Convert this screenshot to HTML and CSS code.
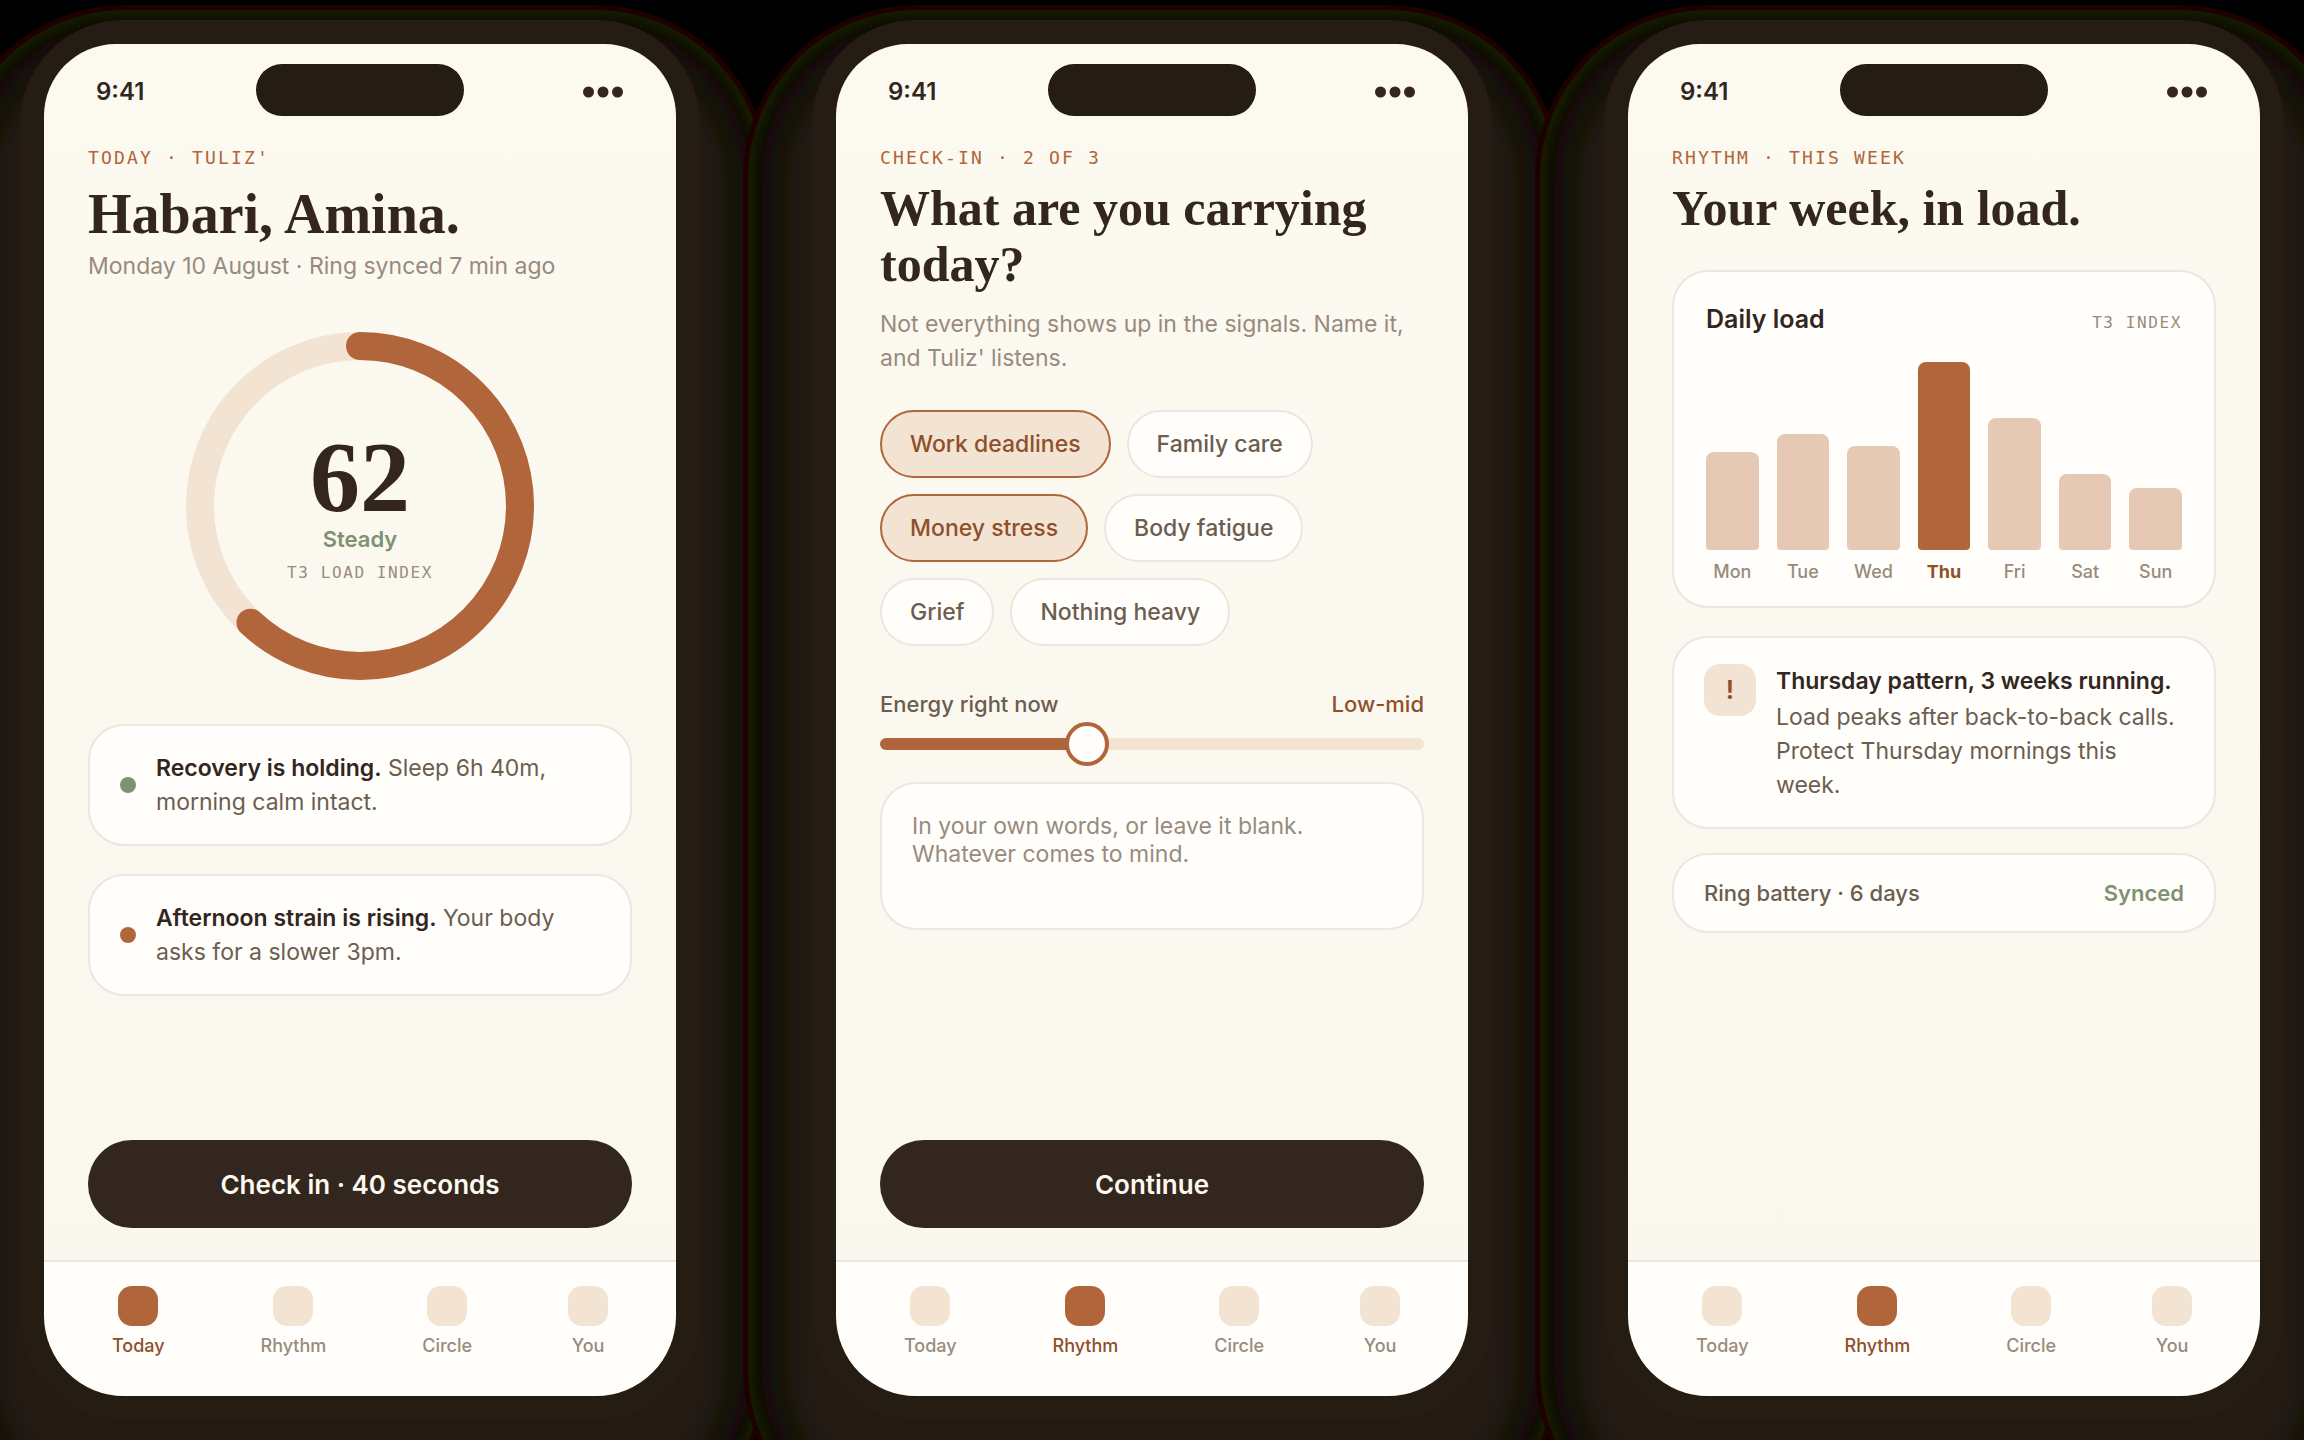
FILE: index.html
```html
<!DOCTYPE html>
<html lang="en">
<head>
    <meta charset="UTF-8">
    <meta name="viewport" content="width=device-width, initial-scale=1.0">
    <title>Tuliz'</title>
    <link rel="stylesheet" href="styles.css">
</head>
<body>
    <main class="stage">

        <!-- Today -->
        <section class="phone">
            <div class="status">
                <span class="status-time">9:41</span>
                <span class="island"></span>
                <svg class="status-dots" width="41" height="12" viewBox="0 0 41 12" aria-hidden="true">
                    <circle cx="5.5" cy="6" r="5.5"/><circle cx="20" cy="6" r="5.5"/><circle cx="34.5" cy="6" r="5.5"/>
                </svg>
            </div>
            <div class="content">
                <p class="eyebrow">TODAY · TULIZ'</p>
                <h1 class="greeting">Habari, Amina.</h1>
                <p class="date">Monday 10 August · Ring synced 7 min ago</p>

                <div class="ring">
                    <svg viewBox="0 0 348 348" aria-hidden="true">
                        <circle class="ring-track" cx="174" cy="174" r="160"/>
                        <circle class="ring-value" cx="174" cy="174" r="160" pathLength="100" stroke-dasharray="62 100" transform="rotate(-90 174 174)"/>
                    </svg>
                    <div class="ring-text">
                        <strong class="ring-number">62</strong>
                        <span class="ring-state">Steady</span>
                        <span class="mono-label">T3 LOAD INDEX</span>
                    </div>
                </div>

                <div class="notes">
                    <div class="card note">
                        <span class="dot dot-sage"></span>
                        <p><b>Recovery is holding.</b> Sleep 6h 40m, morning calm intact.</p>
                    </div>
                    <div class="card note">
                        <span class="dot dot-clay"></span>
                        <p><b>Afternoon strain is rising.</b> Your body asks for a slower 3pm.</p>
                    </div>
                </div>

                <button type="button" class="cta">Check in · 40 seconds</button>
            </div>
            <nav class="tabs">
                <a href="#today" class="tab active"><i></i>Today</a>
                <a href="#rhythm" class="tab"><i></i>Rhythm</a>
                <a href="#circle" class="tab"><i></i>Circle</a>
                <a href="#you" class="tab"><i></i>You</a>
            </nav>
        </section>

        <!-- Check-in -->
        <section class="phone">
            <div class="status">
                <span class="status-time">9:41</span>
                <span class="island"></span>
                <svg class="status-dots" width="41" height="12" viewBox="0 0 41 12" aria-hidden="true">
                    <circle cx="5.5" cy="6" r="5.5"/><circle cx="20" cy="6" r="5.5"/><circle cx="34.5" cy="6" r="5.5"/>
                </svg>
            </div>
            <div class="content">
                <p class="eyebrow">CHECK-IN · 2 OF 3</p>
                <h2 class="title">What are you carrying today?</h2>
                <p class="lead">Not everything shows up in the signals. Name it, and Tuliz' listens.</p>

                <div class="chips">
                    <button type="button" class="chip" aria-pressed="true">Work deadlines</button>
                    <button type="button" class="chip" aria-pressed="false">Family care</button>
                    <button type="button" class="chip" aria-pressed="true">Money stress</button>
                    <button type="button" class="chip" aria-pressed="false">Body fatigue</button>
                    <button type="button" class="chip" aria-pressed="false">Grief</button>
                    <button type="button" class="chip" aria-pressed="false">Nothing heavy</button>
                </div>

                <div class="energy-head">
                    <label for="energy">Energy right now</label>
                    <output for="energy">Low-mid</output>
                </div>
                <input type="range" id="energy" class="energy" min="0" max="100" value="37">

                <textarea class="words" aria-label="In your own words" placeholder="In your own words, or leave it blank. Whatever comes to mind."></textarea>

                <button type="button" class="cta">Continue</button>
            </div>
            <nav class="tabs">
                <a href="#today" class="tab"><i></i>Today</a>
                <a href="#rhythm" class="tab active"><i></i>Rhythm</a>
                <a href="#circle" class="tab"><i></i>Circle</a>
                <a href="#you" class="tab"><i></i>You</a>
            </nav>
        </section>

        <!-- Rhythm -->
        <section class="phone">
            <div class="status">
                <span class="status-time">9:41</span>
                <span class="island"></span>
                <svg class="status-dots" width="41" height="12" viewBox="0 0 41 12" aria-hidden="true">
                    <circle cx="5.5" cy="6" r="5.5"/><circle cx="20" cy="6" r="5.5"/><circle cx="34.5" cy="6" r="5.5"/>
                </svg>
            </div>
            <div class="content">
                <p class="eyebrow">RHYTHM · THIS WEEK</p>
                <h2 class="title">Your week, in load.</h2>

                <div class="card chart">
                    <div class="chart-head">
                        <h3>Daily load</h3>
                        <span class="mono-label">T3 INDEX</span>
                    </div>
                    <div class="bars">
                        <div class="day"><div class="bar" style="height: 98px"></div>Mon</div>
                        <div class="day"><div class="bar" style="height: 116px"></div>Tue</div>
                        <div class="day"><div class="bar" style="height: 104px"></div>Wed</div>
                        <div class="day peak"><div class="bar" style="height: 188px"></div>Thu</div>
                        <div class="day"><div class="bar" style="height: 132px"></div>Fri</div>
                        <div class="day"><div class="bar" style="height: 76px"></div>Sat</div>
                        <div class="day"><div class="bar" style="height: 62px"></div>Sun</div>
                    </div>
                </div>

                <div class="card pattern">
                    <span class="badge">!</span>
                    <div>
                        <h3>Thursday pattern, 3 weeks running.</h3>
                        <p>Load peaks after back-to-back calls. Protect Thursday mornings this week.</p>
                    </div>
                </div>

                <div class="card battery">
                    <span>Ring battery · 6 days</span>
                    <span class="synced">Synced</span>
                </div>
            </div>
            <nav class="tabs">
                <a href="#today" class="tab"><i></i>Today</a>
                <a href="#rhythm" class="tab active"><i></i>Rhythm</a>
                <a href="#circle" class="tab"><i></i>Circle</a>
                <a href="#you" class="tab"><i></i>You</a>
            </nav>
        </section>

    </main>
</body>
</html>
```
FILE: styles.css
```css
:root {
    --ink: #33261e;
    --frame: #251c14;
    --body: #6b5d50;
    --muted: #988b7d;
    --clay: #b0653a;
    --clay-dark: #8f4f2b;
    --sand: #f2e3d2;
    --sage: #7f9173;
    --line: #e9e7e1;
    --card: #fffefa;
    --cream: #fcf9f0;
    --sans: Inter, "Liberation Sans", sans-serif;
    --serif: "Liberation Serif", serif;
    --mono: "DejaVu Sans Mono", monospace;
}

* {
    margin: 0;
    padding: 0;
    box-sizing: border-box;
}

body {
    background-color: #000;
    font-family: var(--sans);
    font-size: 23px;
    line-height: 34px;
    color: var(--body);
}

.stage {
    display: grid;
    grid-template-columns: repeat(3, 1fr);
    gap: 112px;
    min-height: 100vh;
    padding: 20px;
    overflow: hidden;
}

/* Phone shell, with a banded glow falling below it */
.phone {
    display: flex;
    flex-direction: column;
    border: 24px solid var(--frame);
    border-radius: 104px;
    background-color: var(--frame);
    box-shadow:
        0 54px 4px 12px #231a13,
        0 54px 4px 20px #201914,
        0 54px 4px 26px #1a1a0c,
        0 54px 4px 34px #1b1309,
        0 54px 4px 42px #14150c,
        0 54px 2px 50px #190b0e,
        0 54px 6px 58px #0e0f02,
        0 54px 0 64px #171b00,
        0 54px 0 69px #1e0000;
}

.status {
    display: grid;
    grid-template-columns: 1fr auto 1fr;
    align-items: center;
    padding: 20px 52px 0;
    border-radius: 80px 80px 0 0;
    background-color: var(--cream);
    color: var(--ink);
    font-size: 24px;
    font-weight: 600;
}

.island {
    width: 208px;
    height: 52px;
    border-radius: 26px;
    background-color: var(--frame);
}

.status-time,
.status-dots {
    margin-top: 4px;
}

.status-dots {
    justify-self: end;
    fill: var(--ink);
}

.content {
    flex: 1;
    display: flex;
    flex-direction: column;
    padding: 31px 44px 32px;
    background: linear-gradient(var(--cream), #faf7ef);
}

/* Headings */
.eyebrow {
    margin-bottom: 11px;
    font-family: var(--mono);
    font-size: 18px;
    line-height: 22px;
    letter-spacing: 0.12em;
    color: var(--clay);
}

.greeting,
.title {
    font-family: var(--serif);
    font-weight: 700;
    color: var(--ink);
}

.greeting {
    font-size: 56px;
    line-height: 68px;
}

.title {
    font-size: 50px;
    line-height: 56px;
}

.date,
.lead {
    color: var(--muted);
}

.date {
    margin-top: 1px;
}

.lead {
    margin-top: 15px;
}

.mono-label {
    font-family: var(--mono);
    font-size: 16px;
    line-height: 20px;
    letter-spacing: 0.1em;
    color: var(--muted);
}

/* Load ring */
.ring {
    display: grid;
    place-items: center;
    margin: 49px 0 44px;
}

.ring > * {
    grid-area: 1 / 1;
}

.ring svg {
    width: 348px;
    height: 348px;
    fill: none;
    stroke-width: 28;
}

.ring-track {
    stroke: var(--sand);
}

.ring-value {
    stroke: var(--clay);
    stroke-linecap: round;
}

.ring-text {
    display: flex;
    flex-direction: column;
    align-items: center;
}

.ring-number {
    font-family: var(--serif);
    font-size: 100px;
    line-height: 96px;
    color: var(--ink);
}

.ring-state {
    margin-bottom: 10px;
    font-size: 22px;
    line-height: 28px;
    font-weight: 600;
    color: var(--sage);
}

/* Cards */
.card {
    border: 2px solid var(--line);
    border-radius: 36px;
    background-color: var(--card);
}

.card b,
.card h3 {
    font-weight: 600;
    color: var(--ink);
}

.notes {
    display: grid;
    gap: 28px;
}

.note {
    display: flex;
    align-items: center;
    gap: 20px;
    padding: 25px 30px;
}

.dot {
    flex: none;
    width: 16px;
    height: 16px;
    border-radius: 50%;
}

.dot-sage {
    background-color: var(--sage);
}

.dot-clay {
    background-color: var(--clay);
}

.cta {
    height: 88px;
    margin-top: auto;
    border: none;
    border-radius: 44px;
    background-color: var(--ink);
    color: var(--cream);
    font-family: var(--sans);
    font-size: 26px;
    font-weight: 600;
    cursor: pointer;
}

/* Check-in form */
.chips {
    display: flex;
    flex-wrap: wrap;
    gap: 16px;
    margin: 35px 0 44px;
}

.chip {
    height: 68px;
    padding: 0 28px;
    border: 2px solid var(--line);
    border-radius: 34px;
    background-color: var(--card);
    color: var(--body);
    font-family: var(--sans);
    font-size: 23px;
    font-weight: 500;
    cursor: pointer;
}

.chip[aria-pressed="true"] {
    border-color: var(--clay);
    background-color: var(--sand);
    color: var(--clay-dark);
}

.energy-head {
    display: flex;
    justify-content: space-between;
    margin-bottom: 4px;
    font-size: 22px;
    line-height: 28px;
    font-weight: 500;
}

.energy-head output {
    color: var(--clay-dark);
}

.energy {
    appearance: none;
    width: 100%;
    height: 44px;
    background: none;
}

.energy::-webkit-slider-runnable-track {
    height: 12px;
    border-radius: 6px;
    background: linear-gradient(to right, var(--clay) 38%, var(--sand) 38%);
}

.energy::-webkit-slider-thumb {
    appearance: none;
    width: 44px;
    height: 44px;
    margin-top: -16px;
    border: 4px solid var(--clay);
    border-radius: 50%;
    background-color: var(--card);
}

.words {
    height: 148px;
    margin-top: 16px;
    padding: 28px 30px;
    border: 2px solid var(--line);
    border-radius: 36px;
    background-color: var(--card);
    color: var(--ink);
    font-family: var(--sans);
    font-size: 23px;
    line-height: 28px;
    resize: none;
}

.words::placeholder {
    color: var(--muted);
}

/* Weekly chart */
.chart {
    margin-top: 34px;
    padding: 30px 32px 22px;
}

.chart-head {
    display: flex;
    justify-content: space-between;
    align-items: baseline;
}

.chart-head h3 {
    font-size: 25px;
}

.bars {
    display: grid;
    grid-template-columns: repeat(7, 1fr);
    align-items: end;
    gap: 18px;
    margin-top: 26px;
}

.day {
    font-size: 18px;
    line-height: 24px;
    text-align: center;
    font-weight: 500;
    color: var(--muted);
}

.bar {
    margin-bottom: 10px;
    border-radius: 8px 8px 4px 4px;
    background-color: #e5c9b4;
}

.peak {
    font-weight: 700;
    color: var(--clay-dark);
}

.peak .bar {
    background-color: var(--clay);
}

.pattern {
    display: flex;
    gap: 20px;
    margin-top: 28px;
    padding: 26px 30px 25px;
}

.pattern h3 {
    margin-bottom: 2px;
    font-size: 23px;
    line-height: 34px;
}

.badge {
    flex: none;
    width: 52px;
    height: 52px;
    border-radius: 16px;
    background-color: var(--sand);
    color: var(--clay-dark);
    font-size: 26px;
    line-height: 52px;
    font-weight: 600;
    text-align: center;
}

.battery {
    display: flex;
    justify-content: space-between;
    margin-top: 24px;
    padding: 21px 30px;
    font-size: 22px;
    font-weight: 500;
}

.synced {
    font-weight: 600;
    color: var(--sage);
}

/* Bottom tabs */
.tabs {
    display: flex;
    justify-content: space-around;
    height: 136px;
    padding: 24px 20px 0;
    border-top: 2px solid var(--line);
    border-radius: 0 0 80px 80px;
    background-color: var(--card);
}

.tab {
    display: flex;
    flex-direction: column;
    align-items: center;
    gap: 8px;
    font-size: 18px;
    line-height: 24px;
    font-weight: 500;
    color: var(--muted);
    text-decoration: none;
}

.tab i {
    width: 40px;
    height: 40px;
    border-radius: 14px;
    background-color: var(--sand);
}

.tab.active {
    color: var(--clay-dark);
}

.tab.active i {
    background-color: var(--clay);
}
```
